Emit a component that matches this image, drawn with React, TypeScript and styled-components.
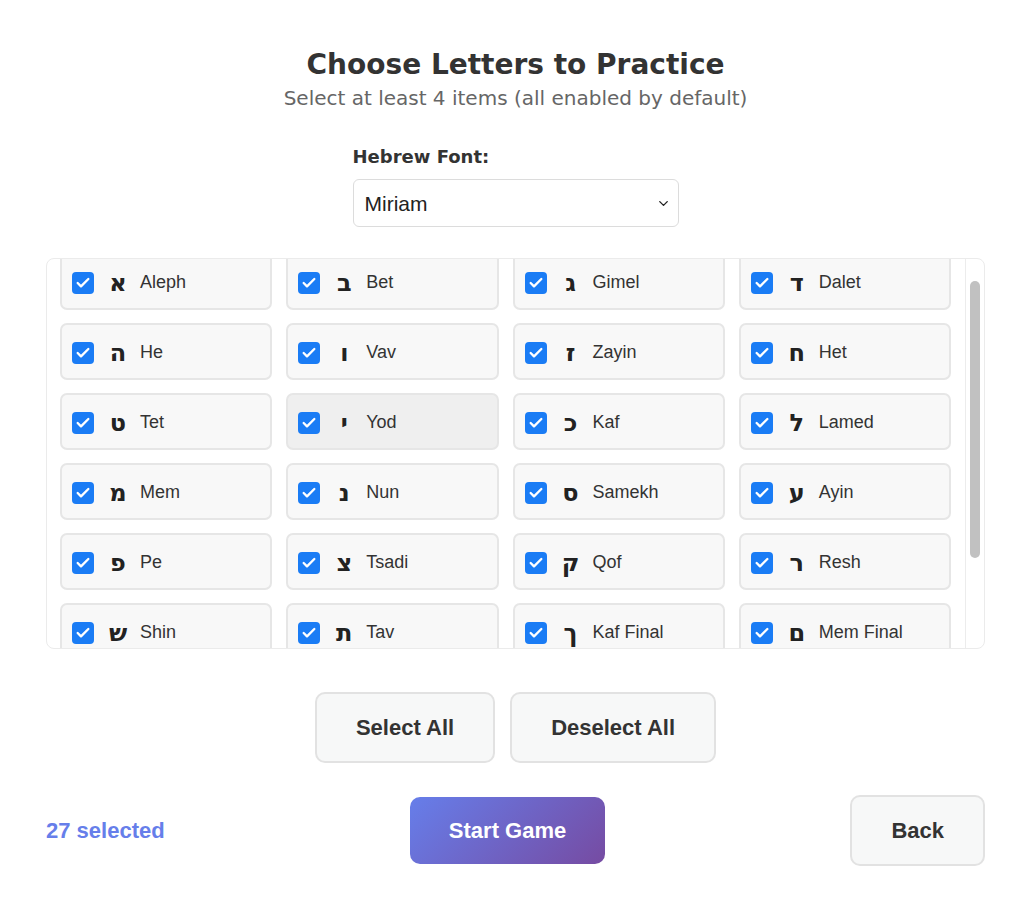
import React, { useLayoutEffect, useRef, useState } from 'react';
import styled, { createGlobalStyle } from 'styled-components';
import { Check, ChevronDown } from 'lucide-react';

const GlobalStyle = createGlobalStyle`
  html, body {
    margin: 0;
    padding: 0;
    background: #ffffff;
  }
  body {
    font-family: "Liberation Sans", Arial, sans-serif;
    color: #333;
  }
`;

interface Letter {
  char: string;
  name: string;
}

const LETTERS: Letter[] = [
  { char: 'א', name: 'Aleph' },
  { char: 'ב', name: 'Bet' },
  { char: 'ג', name: 'Gimel' },
  { char: 'ד', name: 'Dalet' },
  { char: 'ה', name: 'He' },
  { char: 'ו', name: 'Vav' },
  { char: 'ז', name: 'Zayin' },
  { char: 'ח', name: 'Het' },
  { char: 'ט', name: 'Tet' },
  { char: 'י', name: 'Yod' },
  { char: 'כ', name: 'Kaf' },
  { char: 'ל', name: 'Lamed' },
  { char: 'מ', name: 'Mem' },
  { char: 'נ', name: 'Nun' },
  { char: 'ס', name: 'Samekh' },
  { char: 'ע', name: 'Ayin' },
  { char: 'פ', name: 'Pe' },
  { char: 'צ', name: 'Tsadi' },
  { char: 'ק', name: 'Qof' },
  { char: 'ר', name: 'Resh' },
  { char: 'ש', name: 'Shin' },
  { char: 'ת', name: 'Tav' },
  { char: 'ך', name: 'Kaf Final' },
  { char: 'ם', name: 'Mem Final' },
  { char: 'ן', name: 'Nun Final' },
  { char: 'ף', name: 'Pe Final' },
  { char: 'ץ', name: 'Tsadi Final' },
];

const Page = styled.div`
  width: 939px;
  margin-left: 46px;
  padding-top: 48px;
  padding-bottom: 34px;
  display: flex;
  flex-direction: column;
  align-items: center;
`;

const Title = styled.h1`
  margin: 0;
  font-family: "DejaVu Sans", Verdana, sans-serif;
  font-size: 28px;
  line-height: 34px;
  font-weight: 700;
  color: #333;
`;

const Subtitle = styled.p`
  margin: 4px 0 0;
  font-family: "DejaVu Sans", Verdana, sans-serif;
  font-size: 20px;
  line-height: 24px;
  color: #666;
`;

const FontPicker = styled.div`
  width: 326px;
  margin-top: 36px;
  display: flex;
  flex-direction: column;
  gap: 11px;
`;

const PickerLabel = styled.label`
  font-family: "DejaVu Sans", Verdana, sans-serif;
  font-size: 18px;
  line-height: 22px;
  font-weight: 700;
  color: #333;
`;

const SelectWrap = styled.div`
  position: relative;
  height: 48px;
`;

const Select = styled.select`
  appearance: none;
  width: 100%;
  height: 48px;
  box-sizing: border-box;
  padding: 0 11px;
  border: 1px solid #dcdcdc;
  border-radius: 6px;
  background: #fff;
  font-family: "Liberation Sans", Arial, sans-serif;
  font-size: 21px;
  color: #222;
  outline: none;
`;

const Chevron = styled(ChevronDown)`
  position: absolute;
  right: 8px;
  top: 17px;
  pointer-events: none;
  color: #222;
`;

const ScrollFrame = styled.div`
  margin-top: 31px;
  width: 939px;
  height: 391px;
  box-sizing: border-box;
  display: flex;
  border: 1px solid #ebebeb;
  border-radius: 8px;
  overflow: hidden;
`;

const Viewport = styled.div`
  flex: 1;
  overflow-y: auto;
  scrollbar-width: none;

  &::-webkit-scrollbar {
    display: none;
  }
`;

const Track = styled.div`
  width: 19px;
  flex: none;
  box-sizing: border-box;
  border-left: 1px solid #ececec;
  display: flex;
  justify-content: center;
`;

const Thumb = styled.div`
  width: 10px;
  border-radius: 5px;
  background: #c1c1c1;
`;

const Grid = styled.div`
  display: grid;
  grid-template-columns: repeat(4, 1fr);
  column-gap: 14px;
  row-gap: 13px;
  padding: 25px 14px 45px 13px;
`;

const Card = styled.label<{ $hover?: boolean }>`
  height: 57px;
  box-sizing: border-box;
  display: flex;
  align-items: center;
  padding-left: 10px;
  padding-top: 2px;
  border: 2px solid #e6e6e6;
  border-radius: 7px;
  background: ${(p) => (p.$hover ? '#efefef' : '#f8f8f8')};
  cursor: pointer;
`;

const HiddenInput = styled.input`
  position: absolute;
  opacity: 0;
  width: 0;
  height: 0;
`;

const Box = styled.span<{ $on: boolean }>`
  width: 22px;
  height: 22px;
  flex: none;
  box-sizing: border-box;
  border-radius: 4px;
  display: flex;
  align-items: center;
  justify-content: center;
  background: ${(p) => (p.$on ? '#1a7cf5' : '#fff')};
  border: ${(p) => (p.$on ? 'none' : '1px solid #999')};
  color: #fff;
`;

const HebrewChar = styled.span`
  width: 24px;
  margin-left: 12px;
  text-align: center;
  font-family: "DejaVu Sans", "Liberation Sans", sans-serif;
  font-size: 24px;
  line-height: 24px;
  font-weight: 700;
  color: #222;
`;

const Name = styled.span`
  margin-left: 10px;
  font-family: "Liberation Sans", Arial, sans-serif;
  font-size: 18px;
  color: #333;
`;

const ButtonRow = styled.div`
  margin-top: 43px;
  display: flex;
  gap: 15px;
`;

const Button = styled.button<{ $primary?: boolean }>`
  box-sizing: border-box;
  height: ${(p) => (p.$primary ? '67px' : '71px')};
  padding: 0 39px;
  border: ${(p) => (p.$primary ? 'none' : '2px solid #e2e2e2')};
  border-radius: 10px;
  background: ${(p) =>
    p.$primary ? 'linear-gradient(135deg, #667eea 0%, #764ba2 100%)' : '#f7f8f8'};
  color: ${(p) => (p.$primary ? '#fff' : '#333')};
  font-family: "Liberation Sans", Arial, sans-serif;
  font-size: 22px;
  font-weight: 700;
  cursor: pointer;
`;

const Footer = styled.div`
  margin-top: 32px;
  width: 100%;
  display: flex;
  align-items: center;
  justify-content: space-between;
`;

const Count = styled.span`
  font-family: "Liberation Sans", Arial, sans-serif;
  font-size: 22px;
  font-weight: 700;
  color: #667eea;
`;

export default function App() {
  const [selected, setSelected] = useState<Set<string>>(
    () => new Set(LETTERS.map((l) => l.name))
  );
  const [thumb, setThumb] = useState({ top: 0, height: 0 });
  const viewRef = useRef<HTMLDivElement>(null);

  const syncThumb = () => {
    const el = viewRef.current;
    if (!el) return;
    const ratio = el.clientHeight / el.scrollHeight;
    setThumb({ top: el.scrollTop * ratio, height: el.clientHeight * ratio });
  };

  useLayoutEffect(() => {
    if (viewRef.current) viewRef.current.scrollTop = 31;
    syncThumb();
  }, []);

  const toggle = (name: string) => {
    setSelected((prev) => {
      const next = new Set(prev);
      if (next.has(name)) next.delete(name);
      else next.add(name);
      return next;
    });
  };

  return (
    <>
      <GlobalStyle />
      <Page>
        <Title>Choose Letters to Practice</Title>
        <Subtitle>Select at least 4 items (all enabled by default)</Subtitle>

        <FontPicker>
          <PickerLabel htmlFor="font">Hebrew Font:</PickerLabel>
          <SelectWrap>
            <Select id="font" defaultValue="Miriam">
              <option>Miriam</option>
              <option>David</option>
              <option>Narkisim</option>
            </Select>
            <Chevron size={15} strokeWidth={2.2} />
          </SelectWrap>
        </FontPicker>

        <ScrollFrame>
          <Viewport ref={viewRef} onScroll={syncThumb}>
            <Grid>
              {LETTERS.map((l) => {
                const on = selected.has(l.name);
                return (
                  <Card key={l.name} $hover={l.name === 'Yod'}>
                    <HiddenInput
                      type="checkbox"
                      checked={on}
                      onChange={() => toggle(l.name)}
                    />
                    <Box $on={on}>{on && <Check size={16} strokeWidth={3.5} />}</Box>
                    <HebrewChar>{l.char}</HebrewChar>
                    <Name>{l.name}</Name>
                  </Card>
                );
              })}
            </Grid>
          </Viewport>
          <Track>
            <Thumb style={{ marginTop: thumb.top, height: thumb.height }} />
          </Track>
        </ScrollFrame>

        <ButtonRow>
          <Button onClick={() => setSelected(new Set(LETTERS.map((l) => l.name)))}>
            Select All
          </Button>
          <Button onClick={() => setSelected(new Set())}>Deselect All</Button>
        </ButtonRow>

        <Footer>
          <Count>{selected.size} selected</Count>
          <Button $primary>Start Game</Button>
          <Button>Back</Button>
        </Footer>
      </Page>
    </>
  );
}
